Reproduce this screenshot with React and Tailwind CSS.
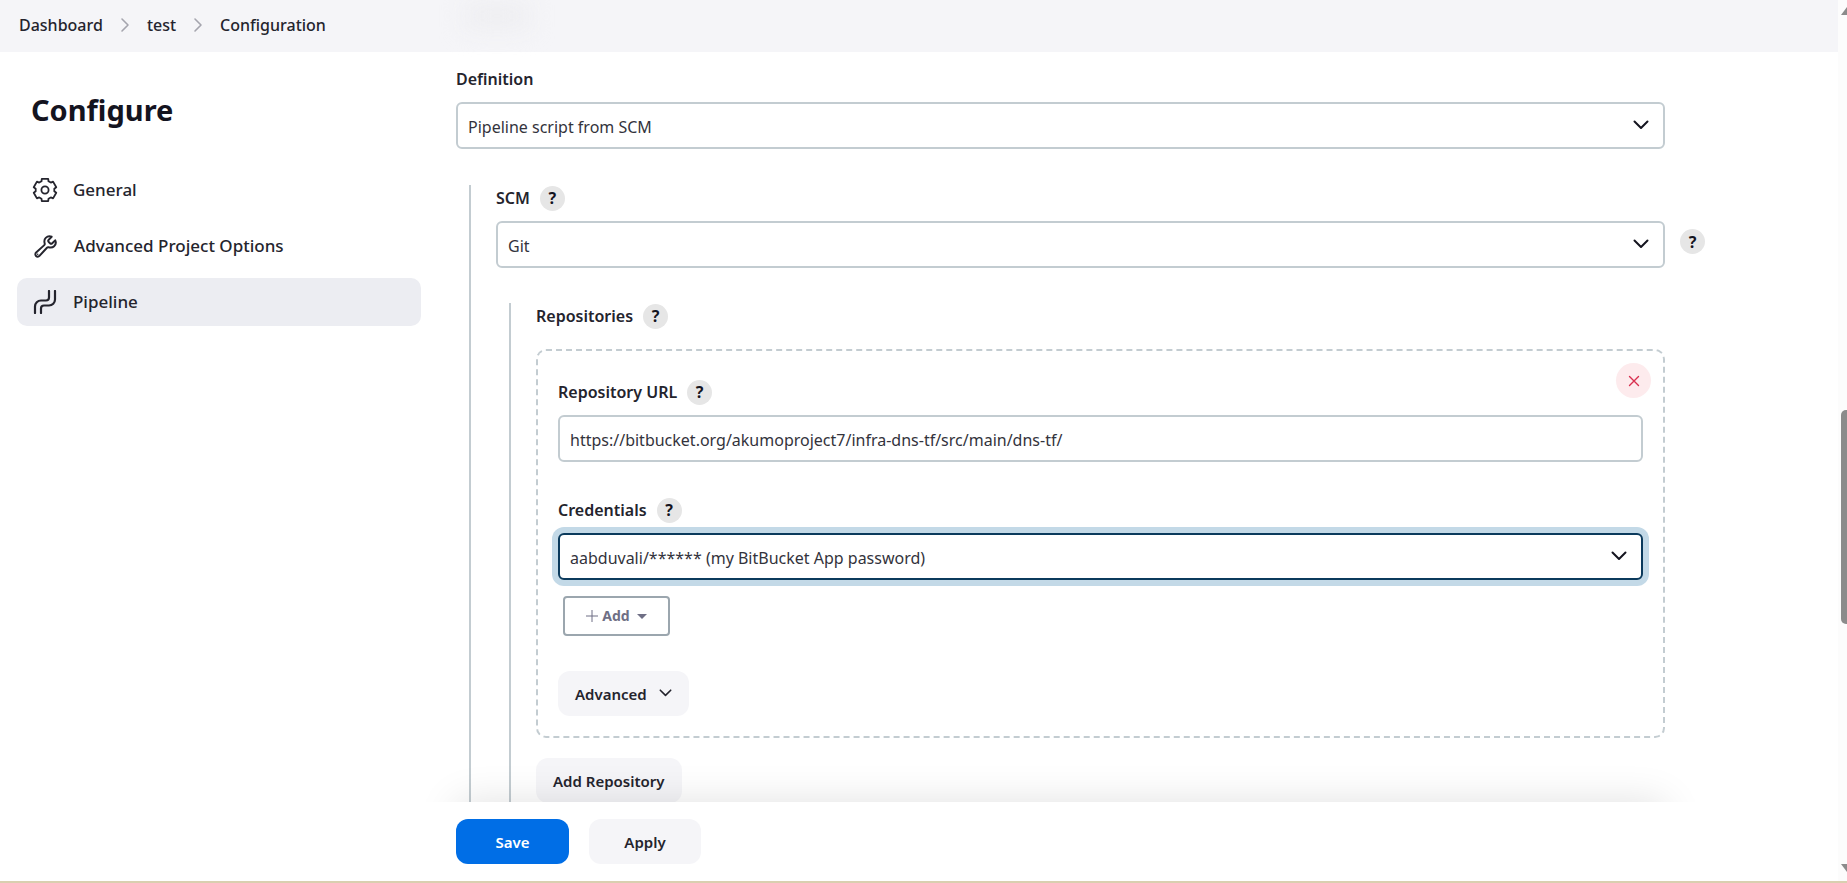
import { IoBuildOutline } from 'react-icons/io5'

/* ============ ICONS ============ */
function ChevronDown({ className = '' }) {
  return (
    <svg viewBox="0 0 16 10" fill="none" className={className}>
      <path d="M1.5 1.5L8 8l6.500-6.500" stroke="currentColor" strokeWidth="2" strokeLinecap="round" strokeLinejoin="round" />
    </svg>
  )
}

function ChevronRight() {
  return (
    <svg viewBox="0 0 10 16" fill="none" className="h-4 w-[10px] text-[#a5a5ae]">
      <path d="M2 2l6 6-6 6" stroke="currentColor" strokeWidth="1.6" strokeLinecap="round" strokeLinejoin="round" />
    </svg>
  )
}

// six teeth, the first one pointing up
const gearPoints = [-90, -30, 30, 90, 150, 210]
  .flatMap((a) => [
    [a - 22, 9.4],
    [a - 16, 11.6],
    [a + 16, 11.6],
    [a + 22, 9.4],
  ])
  .map(([deg, r]) => {
    const t = (deg * Math.PI) / 180
    return `${(12 + r * Math.cos(t)).toFixed(2)},${(12 + r * Math.sin(t)).toFixed(2)}`
  })
  .join(' ')

function GearIcon() {
  return (
    <svg viewBox="0 0 24 24" fill="none" stroke="currentColor" strokeWidth="1.8" strokeLinejoin="round" className="size-6 overflow-visible">
      <polygon points={gearPoints} />
      <circle cx="12" cy="12" r="3.6" />
    </svg>
  )
}

function PipelineIcon() {
  return (
    <svg viewBox="0 0 24 24" fill="none" className="size-6">
      <path
        d="M2 23v-6.500a6 6 0 0 1 6-6h5a3 3 0 0 0 3-3V1M8 23v-4.500a3 3 0 0 1 3-3h5a6 6 0 0 0 6-6V1"
        stroke="currentColor"
        strokeWidth="2.2"
        strokeLinecap="round"
        strokeLinejoin="round"
      />
    </svg>
  )
}

/* ============ FORM PARTS ============ */
const control =
  'block h-[47px] w-full appearance-none rounded-md border-2 bg-white px-[10px] pt-[2px] text-base text-[#33333c] outline-none'

function Help({ topic }) {
  return (
    <button
      type="button"
      aria-label={`Help for feature: ${topic}`}
      className="flex size-[25px] shrink-0 items-center justify-center rounded-full bg-[#e6e6e6] text-base font-bold text-[#14141f]"
    >
      ?
    </button>
  )
}

function LabelRow({ id, text, help, className = 'mb-[10px]' }) {
  const Tag = id ? 'label' : 'div'
  return (
    <div className={`flex h-[26px] items-center gap-[10px] ${className}`}>
      <Tag htmlFor={id} className="text-base font-semibold text-[#24242d]">
        {text}
      </Tag>
      {help && <Help topic={text} />}
    </div>
  )
}

function Select({ id, value, focused }) {
  const state = focused ? 'border-[#0b3a5c] shadow-[0_0_0_6px_#c3d9e7]' : 'border-[#c3ccd1]'
  return (
    <div className="relative min-w-0 flex-1">
      <select id={id} className={`${control} ${state}`}>
        <option>{value}</option>
      </select>
      <ChevronDown className="pointer-events-none absolute top-[18px] right-4 h-[10px] w-4 text-[#14141f]" />
    </div>
  )
}

function Button({ children, className = '' }) {
  return (
    <button
      type="button"
      className={`flex h-[45px] items-center justify-center rounded-xl pt-[2px] text-[15px] font-semibold ${className}`}
    >
      {children}
    </button>
  )
}

/* ============ PAGE PARTS ============ */
function Header() {
  return (
    <header className="relative flex h-[52px] shrink-0 items-center bg-[#f5f5f8] pl-[19px]">
      <div className="absolute top-1 left-[465px] h-6 w-[64px] bg-[#ededf0] blur-[12px]" />
      <nav aria-label="Breadcrumb" className="flex items-center gap-[17px] pb-[2px] text-base font-medium text-[#24242d]">
        <a href="#dashboard">Dashboard</a>
        <ChevronRight />
        <a href="#test">test</a>
        <ChevronRight />
        <a href="#configuration">Configuration</a>
      </nav>
    </header>
  )
}

const sections = [
  { name: 'General', icon: <GearIcon /> },
  { name: 'Advanced Project Options', icon: <IoBuildOutline className="size-[25px] [&_path]:stroke-[40px]" /> },
  { name: 'Pipeline', icon: <PipelineIcon />, active: true },
]

function Sidebar() {
  return (
    <aside className="w-[456px] shrink-0 pt-[36px] pr-[35px] pl-[17px]">
      <h1 className="pl-[14px] text-[29px] leading-[44px] font-bold text-[#14141f]">Configure</h1>
      <nav className="mt-[34px] flex flex-col gap-2">
        {sections.map((s) => (
          <a
            key={s.name}
            href={`#${s.name}`}
            className={`flex h-12 items-center gap-4 rounded-[10px] pl-4 text-[17px] font-medium text-[#24242d] ${s.active ? 'bg-[#ecedf2]' : ''}`}
          >
            {s.icon}
            {s.name}
          </a>
        ))}
      </nav>
    </aside>
  )
}

function Repository() {
  return (
    <div className="relative rounded-[10px] border-2 border-dashed border-[#c3ccd1] px-5 pt-7 pb-5">
      <button
        type="button"
        aria-label="Delete repository"
        className="absolute top-3 right-3 flex size-[35px] items-center justify-center rounded-full bg-[#fdebed] text-[#d8304f]"
      >
        <svg viewBox="0 0 12 12" fill="none" className="size-3">
          <path d="M1.500 1.500l9 9M10.500 1.500l-9 9" stroke="currentColor" strokeWidth="1.400" strokeLinecap="round" />
        </svg>
      </button>
      <LabelRow id="url" text="Repository URL" help />
      <input
        id="url"
        type="text"
        defaultValue="https://bitbucket.org/akumoproject7/infra-dns-tf/src/main/dns-tf/"
        className={`${control} border-[#c3ccd1]`}
      />
      <div className="mt-[35px]">
        <LabelRow id="credentials" text="Credentials" help />
        <Select id="credentials" value="aabduvali/****** (my BitBucket App password)" focused />
      </div>
      <button
        type="button"
        className="mt-4 ml-[5px] flex h-10 w-[107px] items-center justify-center gap-1 rounded border-2 border-[#9ba6ae] text-sm font-bold text-[#6f6f85]"
      >
        <svg viewBox="0 0 12 12" className="size-3" stroke="currentColor" strokeWidth="1">
          <path d="M6 0v12M0 6h12" />
        </svg>
        Add
        <svg viewBox="0 0 10 5" className="ml-[3px] h-[5px] w-[10px]" fill="currentColor">
          <path d="M0 0h10L5 5z" />
        </svg>
      </button>
      <div className="mt-[35px] flex">
        <Button className="gap-3 bg-[#f5f5f8] px-[17px] text-[#24242d]">
          Advanced
          <ChevronDown className="mb-1 h-[8px] w-[13px]" />
        </Button>
      </div>
    </div>
  )
}

function Scrollbar() {
  return (
    <div className="relative w-[9px] shrink-0 overflow-hidden bg-[#fcfcfc]">
      <svg viewBox="0 0 12 8" className="absolute top-[7px] left-[3px] h-2 w-3" fill="#8b8b8b">
        <path d="M0 8h12L6 0z" />
      </svg>
      <div className="absolute top-[410px] left-[3px] h-[214px] w-3 rounded-[5px] bg-[#8b8b8b]" />
      <svg viewBox="0 0 12 8" className="absolute bottom-[9px] left-[3px] h-2 w-3" fill="#8b8b8b">
        <path d="M0 0h12L6 8z" />
      </svg>
    </div>
  )
}

export default function App() {
  return (
    <div className="flex h-screen border-b-2 border-[#d9cfb0] bg-white font-['Noto_Sans','Open_Sans',sans-serif]">
      <div className="flex min-w-0 flex-1 flex-col">
        <Header />
        <div className="flex min-h-0 flex-1">
          <Sidebar />
          <main className="flex min-w-0 flex-1 flex-col">
            <div className="relative min-h-0 flex-1 overflow-hidden pt-[14px] pr-[173px]">
              <LabelRow id="definition" text="Definition" />
              <Select id="definition" value="Pipeline script from SCM" />
              <div className="mt-9 ml-[13px] border-l-2 border-[#c3ccd1] pl-[25px]">
                <LabelRow id="scm" text="SCM" help />
                <div className="-mr-10 flex gap-[15px]">
                  <Select id="scm" value="Git" />
                  <div className="pt-2">
                    <Help topic="Git" />
                  </div>
                </div>
                <div className="mt-[35px] ml-[13px] border-l-2 border-[#c3ccd1] pb-10 pl-[25px]">
                  <LabelRow text="Repositories" help className="mb-5" />
                  <Repository />
                  <div className="mt-5 flex">
                    <Button className="bg-[#f5f5f8] px-[17px] text-[#24242d]">Add Repository</Button>
                  </div>
                </div>
              </div>
            </div>
            <footer className="relative flex h-[79px] shrink-0 items-center gap-5">
              {/* only the upper half of the shadow shows */}
              <div className="pointer-events-none absolute right-[133px] bottom-full -left-10 h-10 overflow-hidden">
                <div className="mx-10 mt-10 h-20 shadow-[0_0_40px_rgba(0,0,0,0.12)]" />
              </div>
              <Button className="w-[113px] bg-[#006ee6] text-white">Save</Button>
              <Button className="w-[112px] bg-[#f5f5f8] text-[#24242d]">Apply</Button>
            </footer>
          </main>
        </div>
      </div>
      <Scrollbar />
    </div>
  )
}
